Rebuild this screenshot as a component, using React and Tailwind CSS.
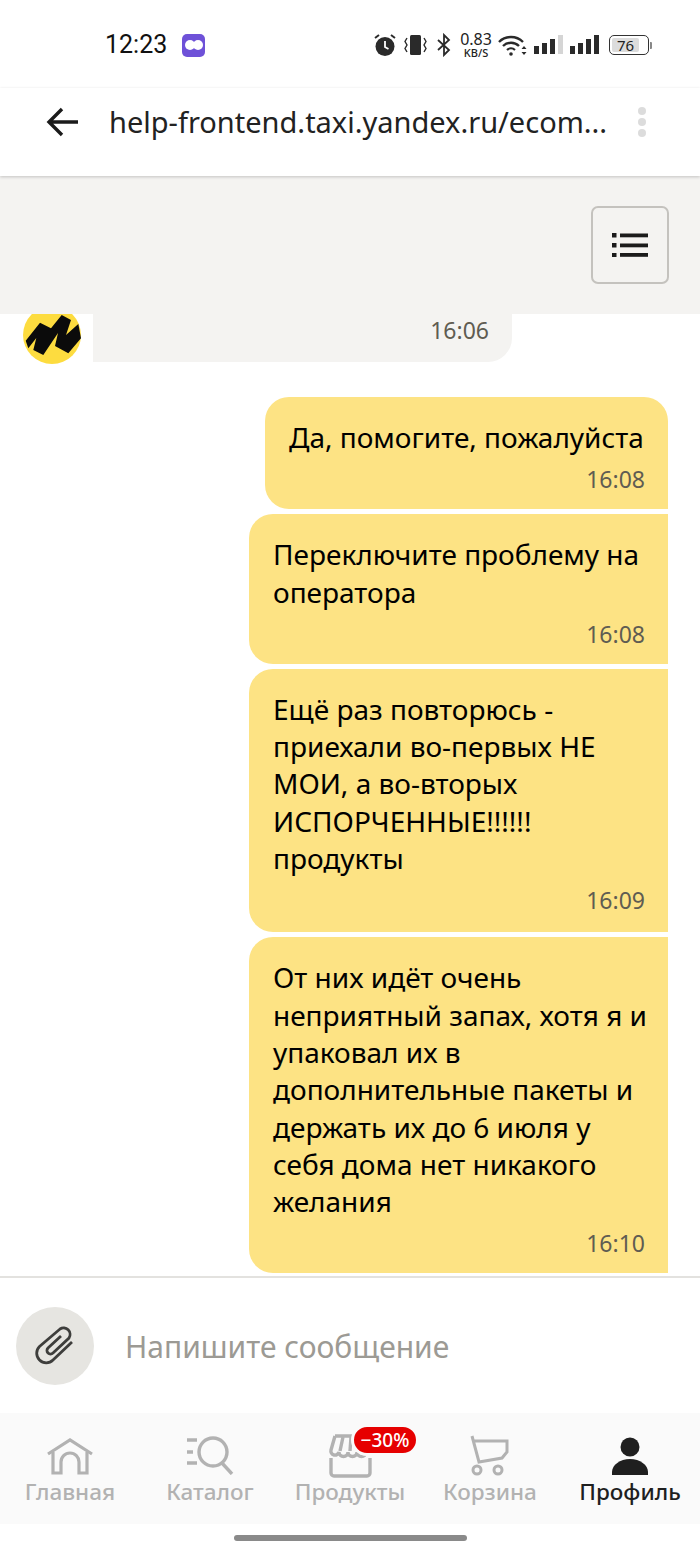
const sans = "font-['Noto_Sans',sans-serif]";

const messages = [
  { time: "16:08", width: "w-[403px]", first: true, lines: ["Да, помогите, пожалуйста"], pad: "pb-[15px]" },
  { time: "16:08", width: "w-[419px]", lines: ["Переключите проблему на", "оператора"], pad: "pb-[15px]" },
  {
    time: "16:09",
    width: "w-[419px]",
    lines: ["Ещё раз повторюсь -", "приехали во-первых НЕ", "МОИ, а во-вторых", "ИСПОРЧЕННЫЕ!!!!!!", "продукты"],
    pad: "pb-[17px]",
  },
  {
    time: "16:10",
    width: "w-[419px]",
    lines: [
      "От них идёт очень",
      "неприятный запах, хотя я и",
      "упаковал их в",
      "дополнительные пакеты и",
      "держать их до 6 июля у",
      "себя дома нет никакого",
      "желания",
    ],
    pad: "pb-[15px]",
  },
];

const Bubble = ({ msg }) => (
  <div
    className={`${msg.width} ${msg.pad} self-end bg-[#fde384] pl-[24px] pr-[23px] pt-[22px] text-[#000] ${
      msg.first ? "rounded-tl-[24px] rounded-tr-[24px] rounded-bl-[24px]" : "rounded-tl-[24px] rounded-bl-[24px]"
    }`}
  >
    <div className="text-[28px] leading-[37.3px]">
      {msg.lines.map((line) => (
        <div key={line} className="whitespace-nowrap">
          {line}
        </div>
      ))}
    </div>
    <div className="mt-[8px] text-right text-[23px] leading-[30px] text-[#5f5c52]">{msg.time}</div>
  </div>
);

const Bars = ({ last, className }) => (
  <svg width="29" height="20" viewBox="0 0 29 20" className={className}>
    <rect x="0" y="11" width="5" height="8" fill="#2a2a2a" />
    <rect x="8" y="8" width="5" height="11" fill="#2a2a2a" />
    <rect x="16" y="4" width="5" height="15" fill="#2a2a2a" />
    <rect x="24" y="0" width="5" height="19" fill={last} />
  </svg>
);

const StatusIcons = () => (
  <div className="mt-[3px] flex items-center text-[#222]">
    <svg width="22" height="24" viewBox="0 0 22 24" className="mr-[8px]">
      <circle cx="11" cy="13.500" r="9.500" fill="#2a2a2a" />
      <path d="M11 8v6l3.500 2" stroke="#fff" strokeWidth="1.8" fill="none" />
      <path d="M1 5l4-3M21 5l-4-3" stroke="#2a2a2a" strokeWidth="2" />
    </svg>
    <svg width="23" height="24" viewBox="0 0 23 24" className="mr-[10px]">
      <rect x="6" y="2" width="11" height="20" rx="1.5" fill="#2a2a2a" />
      <path d="M3 5L1 8.500l2 3.500-2 3.500L3 19M20 5l2 3.500-2 3.500 2 3.500-2 3.500" stroke="#2a2a2a" strokeWidth="1.4" fill="none" />
    </svg>
    <svg width="14" height="24" viewBox="0 0 14 24" className="mr-[9px]">
      <path d="M1 7l11 10-5 5V2l5 5L1 17" stroke="#2a2a2a" strokeWidth="1.8" fill="none" />
    </svg>
    <div className="mr-[6px] flex w-[32px] flex-col items-center text-[#222]">
      <span className="text-[16px] leading-[13px]">0.83</span>
      <span className="mt-[2px] text-[11px] font-medium leading-[9px]">KB/S</span>
    </div>
    <svg width="30" height="24" viewBox="0 0 30 24" className="mr-[6px]">
      <path d="M1 9a17 17 0 0 1 24 0" stroke="#2a2a2a" strokeWidth="2.4" fill="none" />
      <path d="M5 13a11.500 11.500 0 0 1 16 0" stroke="#2a2a2a" strokeWidth="2.4" fill="none" />
      <path d="M9 17a6 6 0 0 1 8 0" stroke="#2a2a2a" strokeWidth="2.2" fill="none" />
      <circle cx="13" cy="21" r="1.8" fill="#2a2a2a" />
      <path d="M26 13l2.500 3h-5zM26 22l2.500-3h-5z" fill="#2a2a2a" />
    </svg>
    <Bars last="#d5d5d5" className="mr-[7px]" />
    <Bars last="#2a2a2a" className="mr-[10px]" />
    <div className="flex items-center">
      <div className="flex h-[20px] w-[40px] items-center rounded-[5px] border border-[#333] p-[2px]">
        <div className="flex h-full w-[27px] items-center justify-center rounded-[2px] bg-[#dcdcdc] text-[15px] leading-none">
          76
        </div>
      </div>
      <div className="ml-[1px] h-[7px] w-[2px] rounded-r-[1px] bg-[#888]" />
    </div>
  </div>
);

const NavItem = ({ label, active, icon, children }) => (
  <div className="relative flex flex-col items-center">
    <div className="flex h-[42px] items-start">{icon}</div>
    {children}
    <span
      className={`mt-[1px] whitespace-nowrap text-[22.500px] font-medium leading-[32px] ${
        active ? "text-[#1f1f1f]" : "text-[#b2b2b2]"
      }`}
    >
      {label}
    </span>
  </div>
);

const HomeIcon = () => (
  <svg width="60" height="42" viewBox="0 4 60 42" fill="none" stroke="#b2b2b2" strokeWidth="3.2">
    <path d="M8 25L30 11l22 14" />
    <path d="M13 23v21h8V33a9 9 0 0 1 18 0v11h8V23" />
  </svg>
);

const CatalogIcon = () => (
  <svg width="50" height="42" viewBox="0 0 50 42" fill="none" stroke="#b2b2b2" strokeWidth="3.4">
    <path d="M2 7h10M2 19h6M2 30h10" />
    <circle cx="28" cy="19" r="14" />
    <path d="M37 30l10 11" />
  </svg>
);

const ProductsIcon = () => (
  <svg width="60" height="51" viewBox="0 9 60 51" fill="none" stroke="#b2b2b2" strokeWidth="3.4" className="-mb-[9px]">
    <path d="M11 34v15a3 3 0 0 0 3 3h33a3 3 0 0 0 3-3V34" />
    <path d="M15 12h30M15 12l-4 14a4 4 0 0 0 8 2 4.500 4.500 0 0 0 9 0 4.500 4.500 0 0 0 9 0 4.500 4.500 0 0 0 9 0" />
    <path d="M23 13l-3 14M31 13l-1 14" />
  </svg>
);

const CartIcon = () => (
  <svg width="40" height="44" viewBox="0 0 40 44" fill="none" stroke="#b2b2b2" strokeWidth="3" className="-mb-[2px]">
    <path d="M2 3l7 26 23-4 5-6V8H3" />
    <circle cx="7" cy="37" r="4" />
    <circle cx="28" cy="37" r="4" />
  </svg>
);

const ProfileIcon = () => (
  <svg width="36" height="42" viewBox="0 0 36 42" fill="#1f1f1f">
    <circle cx="18" cy="14" r="9.500" />
    <path d="M0 42v-3C0 32 8 26 18 26s18 6 18 13v3z" />
  </svg>
);

export default function App() {
  return (
    <div className={`flex h-[1556px] w-[700px] flex-col overflow-hidden bg-white ${sans}`}>
      {/* status bar */}
      <div className="flex h-[88px] items-start justify-between pl-[105px] pr-[48px] pt-[30px]">
        <div className="flex items-center">
          <span className="font-['Roboto',sans-serif] text-[25px] leading-[30px] text-[#111]">12:23</span>
          <div className="ml-[15px] flex h-[23px] w-[23px] items-center justify-center rounded-[5px] bg-[#6e51d8]">
            <div className="h-[10px] w-[10px] rounded-full bg-white" />
            <div className="-ml-[2px] h-[10px] w-[10px] rounded-full bg-white" />
          </div>
        </div>
        <StatusIcons />
      </div>

      {/* browser bar */}
      <div className="relative z-10 flex h-[88px] items-center pb-[20px] pl-[46px] pr-[54px] shadow-[0_1px_3px_rgba(0,0,0,0.2)]">
        <svg width="32" height="30" viewBox="0 0 32 30" fill="none" stroke="#1b1b1b" strokeWidth="3.4">
          <path d="M32 15H3M16 2L3 15l13 13" />
        </svg>
        <span className="ml-[31px] flex-1 whitespace-nowrap text-[29px] leading-[36px] text-[#222]">
          help-frontend.taxi.yandex.ru/ecom...
        </span>
        <div className="flex flex-col gap-[3px]">
          <div className="h-[8px] w-[8px] rounded-full bg-[#dcdcdc]" />
          <div className="h-[8px] w-[8px] rounded-full bg-[#dcdcdc]" />
          <div className="h-[8px] w-[8px] rounded-full bg-[#dcdcdc]" />
        </div>
      </div>

      {/* chat toolbar */}
      <div className="flex h-[138px] items-start justify-end bg-[#f4f3f1] pr-[31px] pt-[30px]">
        <div className="flex h-[78px] w-[78px] items-center justify-center rounded-[7px] border-2 border-[#c4c2be]">
          <svg width="36" height="24" viewBox="0 0 36 24" fill="#1b1b1b">
            <rect x="0" y="0" width="4.500" height="4.500" />
            <rect x="8" y="0.500" width="28" height="3.800" />
            <rect x="0" y="10" width="4.500" height="4.500" />
            <rect x="8" y="10.500" width="28" height="3.800" />
            <rect x="0" y="20" width="4.500" height="4" />
            <rect x="8" y="20" width="28" height="3.800" />
          </svg>
        </div>
      </div>

      {/* messages */}
      <div className="flex h-[962px] flex-col overflow-hidden pr-[32px]">
        <div className="flex items-start">
          <svg width="58" height="50" viewBox="0 0 58 50" className="ml-[23px] shrink-0">
            <circle cx="29" cy="21" r="29" fill="#fddc3f" />
            <path
              d="M2.700 26.700L17 8.700l11 5.600L38.700 1 48 6l-5 15L55.300 10l2.700 14.300-12.700 15L32 32l3-13L20.300 41l-10-5 3-12-8 10.300z"
              fill="#0b0b0b"
            />
          </svg>
          <div className="ml-[12px] flex h-[48px] w-[419px] justify-end rounded-br-[24px] bg-[#f4f3f1] pr-[23px] pt-[1px]">
            <span className="text-[23px] leading-[30px] text-[#5f5c52]">16:06</span>
          </div>
        </div>
        <div className="mt-[33px] flex flex-col gap-[5px]">
          {messages.map((msg) => (
            <Bubble key={msg.time + msg.lines[0]} msg={msg} />
          ))}
        </div>
      </div>

      {/* input */}
      <div className="flex h-[137px] items-center border-t-2 border-[#e3e2df] pl-[16px]">
        <div className="flex h-[78px] w-[78px] items-center justify-center rounded-full bg-[#e6e5e1]">
          <svg width="60" height="60" viewBox="0 2 60 60" fill="none" stroke="#3e3e3c" strokeWidth="2.800">
            <path d="M47 28L28 46a9.500 9.500 0 0 1-13.500-13.500L35 15a6.500 6.500 0 0 1 9 9L28 39a3.500 3.500 0 0 1-5-5l13-12" />
          </svg>
        </div>
        <span className="ml-[31px] mt-[3px] text-[30px] leading-[38px] text-[#9c9a94]">Напишите сообщение</span>
      </div>

      {/* bottom nav */}
      <div className="grid h-[111px] grid-cols-5 bg-[#fafafa] pt-[20px]">
        <NavItem label="Главная" icon={<HomeIcon />} />
        <NavItem label="Каталог" icon={<CatalogIcon />} />
        <NavItem label="Продукты" icon={<ProductsIcon />}>
          <div className="absolute left-[71px] top-[-9px] flex h-[32px] w-[68px] items-center justify-center rounded-full border-[3px] border-[#fafafa] bg-[#e60000] text-[19px] font-medium leading-none text-white">
            −30%
          </div>
        </NavItem>
        <NavItem label="Корзина" icon={<CartIcon />} />
        <NavItem label="Профиль" active icon={<ProfileIcon />} />
      </div>

      <div className="mt-[11px] flex justify-center">
        <div className="h-[6px] w-[233px] rounded-full bg-[#8a8a8a]" />
      </div>
    </div>
  );
}
